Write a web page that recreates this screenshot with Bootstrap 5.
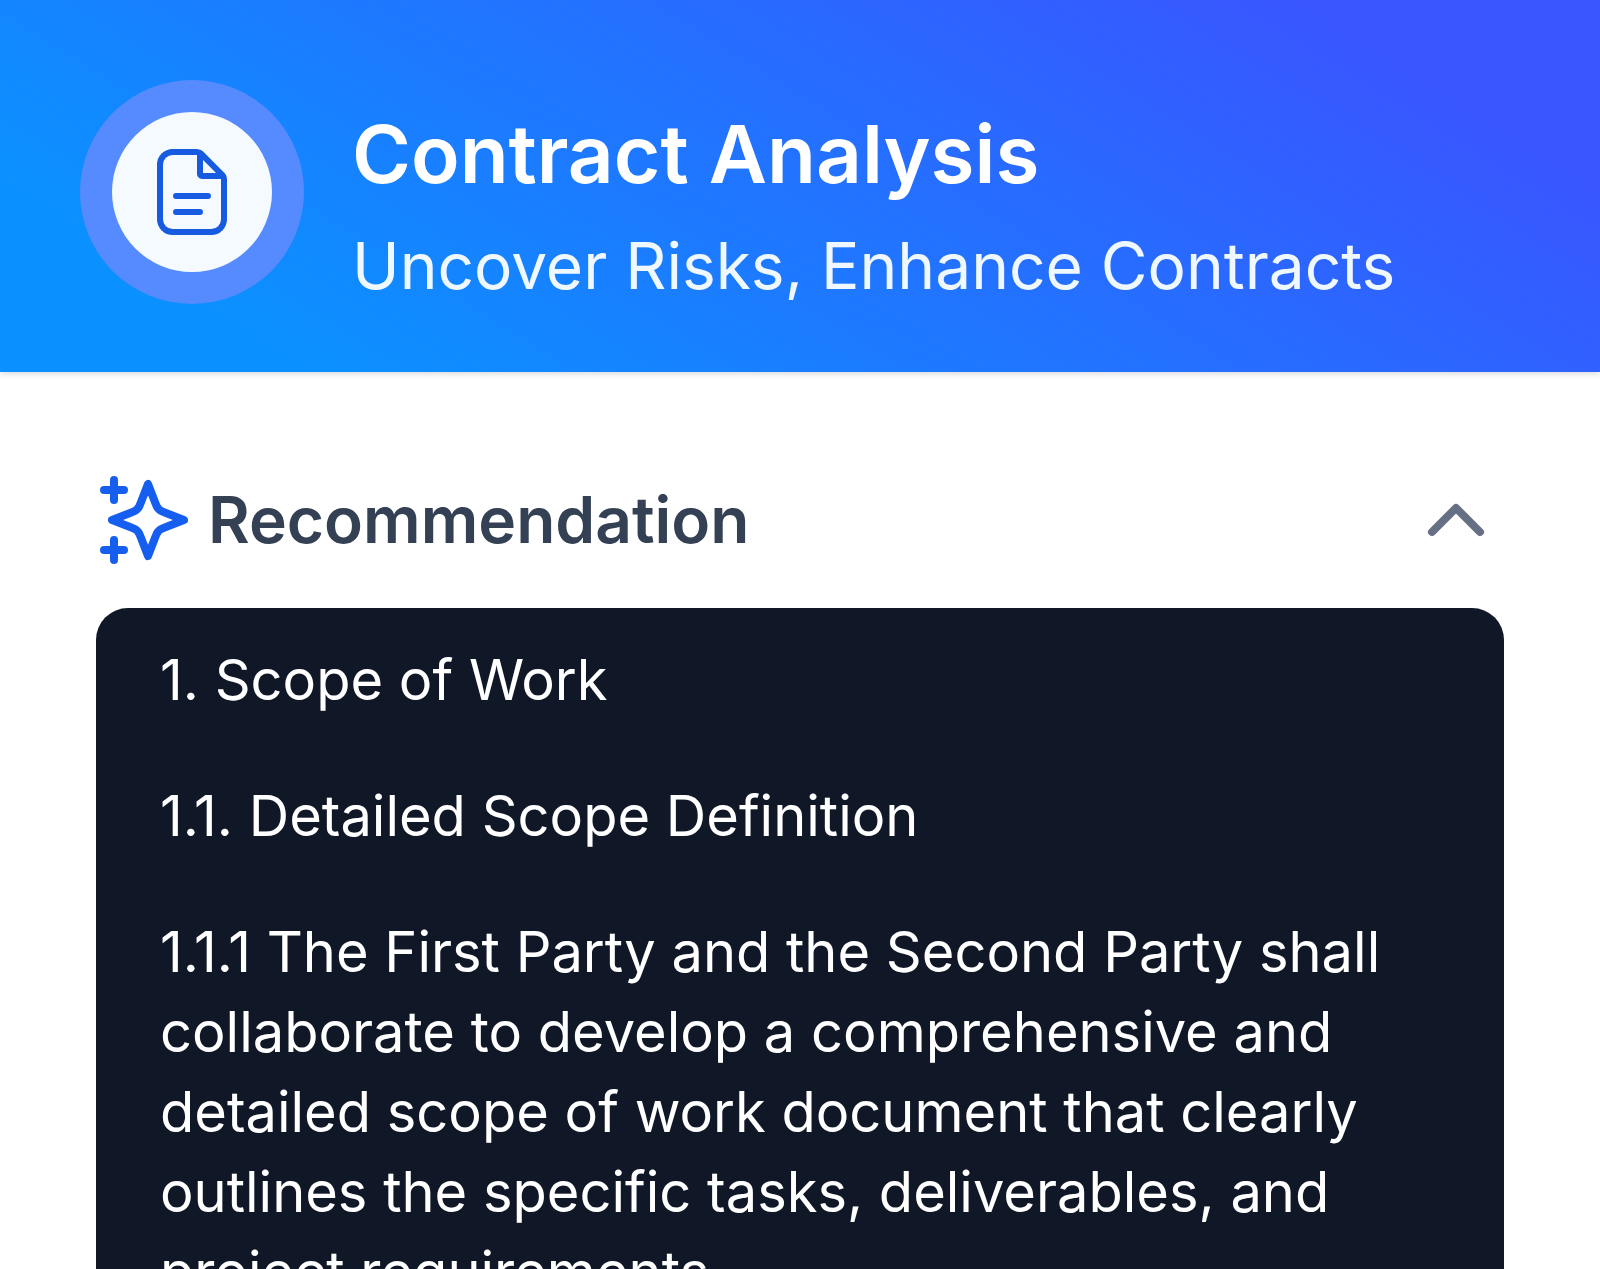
<!DOCTYPE html>
<html lang="en">
<head>
<meta charset="utf-8">
<meta name="viewport" content="width=device-width, initial-scale=1">
<title>Contract Analysis</title>
<link href="https://cdn.jsdelivr.net/npm/bootstrap@5.3.0/dist/css/bootstrap.min.css" rel="stylesheet">
<style>
  body { font-family: Inter, "Liberation Sans", sans-serif; background: #fff; }
  .app-view { height: 100vh; }
  .hero {
    padding: 80px 80px 68px; gap: 48px;
    background: linear-gradient(32deg, #0b91ff 14%, #3955ff 87%);
    box-shadow: 0 2px 6px rgba(16, 24, 40, .16);
  }
  .hero-icon { width: 224px; height: 224px; background: #558bff; }
  .hero-disc { width: 160px; height: 160px; background: #f5faff; color: #175ce0; }
  .hero-text { padding-top: 16px; }
  .hero-title { font-size: 80px; line-height: 116px; font-weight: 600; }
  .hero-sub { font-size: 64px; line-height: 108px; margin-bottom: -16px; color: #eff8ff; }
  .content { padding: 100px 96px 0; }
  .section-title { font-size: 64px; line-height: 96px; font-weight: 600; color: #344054; }
  .panel-gap { gap: 16px; margin-bottom: 40px; }
  .accent { color: #155eef; }
  .toggle { color: #667085; }
  .doc { background: #101828; border-radius: 32px 32px 0 0; padding: 32px 64px; font-size: 56px; line-height: 80px; }
  .doc p { margin-bottom: 56px; }
</style>
</head>
<body>
<div class="app-view d-flex flex-column overflow-hidden">
  <header class="hero d-flex align-items-start flex-shrink-0">
    <div class="hero-icon rounded-circle d-flex align-items-center justify-content-center flex-shrink-0">
      <div class="hero-disc rounded-circle d-flex align-items-center justify-content-center">
        <svg width="96" height="96" viewBox="0 0 24 24" fill="none" stroke="currentColor" stroke-width="1.5" stroke-linecap="round" stroke-linejoin="round" aria-hidden="true">
          <path d="M13.17 2H7.2C5.43 2 4 3.43 4 5.2v13.6C4 20.57 5.43 22 7.2 22h9.6c1.77 0 3.2-1.43 3.2-3.2V8.83c0-.43-.17-.84-.47-1.14l-5.22-5.22c-.3-.3-.71-.47-1.14-.47Z"/>
          <path d="M14 2.3v5.2c0 .28.22.5.5.5h5.2M8 13h8M8 17h6"/>
        </svg>
      </div>
    </div>
    <div class="hero-text text-nowrap">
      <h1 class="hero-title text-white mb-0">Contract Analysis</h1>
      <p class="hero-sub">Uncover Risks, Enhance Contracts</p>
    </div>
  </header>
  <main class="content flex-grow-1">
    <div class="panel-gap d-flex align-items-center">
      <svg class="accent" width="96" height="96" viewBox="0 0 24 24" fill="none" stroke="currentColor" stroke-width="2" stroke-linecap="round" stroke-linejoin="round" aria-hidden="true">
        <path d="M4.5 22V17M4.5 7V2M2 4.5H7M2 19.5H7M13 3L11.2658 7.50886C10.9838 8.24209 10.8428 8.60871 10.6235 8.91709C10.4292 9.1904 10.1904 9.42919 9.91709 9.62353C9.60871 9.84281 9.24209 9.98381 8.50886 10.2658L4 12L8.50886 13.7342C9.24209 14.0162 9.60871 14.1572 9.91709 14.3765C10.1904 14.5708 10.4292 14.8096 10.6235 15.0829C10.8428 15.3913 10.9838 15.7579 11.2658 16.4911L13 21L14.7342 16.4911C15.0162 15.7579 15.1572 15.3913 15.3765 15.0829C15.5708 14.8096 15.8096 14.5708 16.0829 14.3765C16.3913 14.1572 16.7579 14.0162 17.4911 13.7342L22 12L17.4911 10.2658C16.7579 9.98381 16.3913 9.84281 16.0829 9.62353C15.8096 9.42919 15.5708 9.1904 15.3765 8.91709C15.1572 8.60871 15.0162 8.24209 14.7342 7.50886L13 3Z"/>
      </svg>
      <h2 class="section-title mb-0">Recommendation</h2>
      <button type="button" class="toggle btn p-0 border-0 ms-auto d-flex" data-bs-toggle="collapse" data-bs-target="#recommendation" aria-expanded="true" aria-controls="recommendation" aria-label="Collapse recommendation">
        <svg width="96" height="96" viewBox="0 0 24 24" fill="none" stroke="currentColor" stroke-width="2" stroke-linecap="round" stroke-linejoin="round" aria-hidden="true"><path d="M18 15l-6-6-6 6"/></svg>
      </button>
    </div>
    <div id="recommendation" class="collapse show">
      <div class="doc text-white">
        <p>1. Scope of Work</p>
        <p>1.1. Detailed Scope Definition</p>
        <p>1.1.1 The First Party and the Second Party shall collaborate to develop a comprehensive and detailed scope of work document that clearly outlines the specific tasks, deliverables, and project requirements.</p>
      </div>
    </div>
  </main>
</div>
<script src="https://cdn.jsdelivr.net/npm/bootstrap@5.3.0/dist/js/bootstrap.bundle.min.js"></script>
</body>
</html>
